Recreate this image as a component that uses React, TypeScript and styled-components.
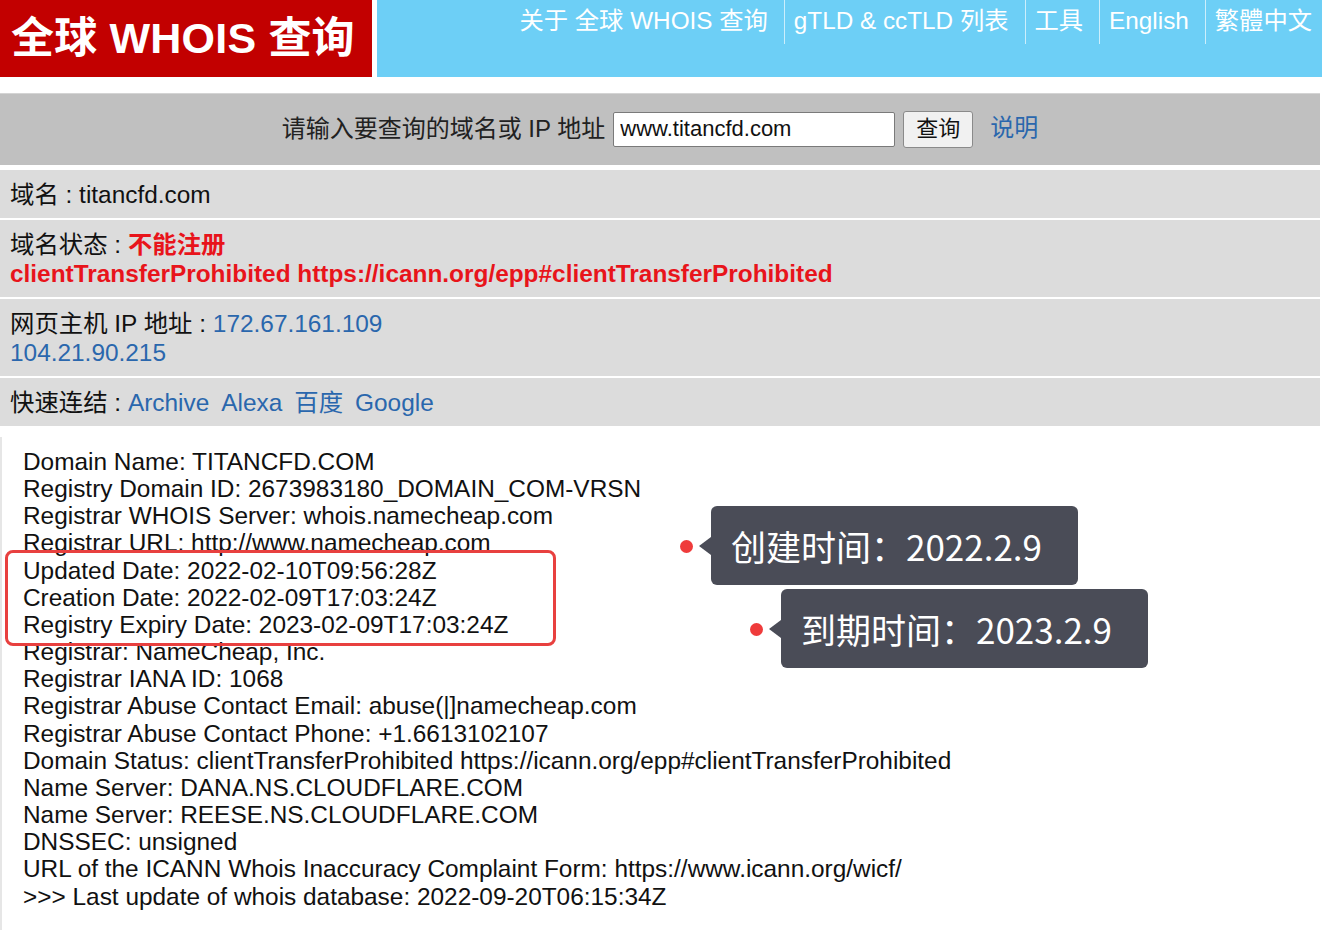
import * as React from "react";
import styled, { createGlobalStyle } from "styled-components";

const GlobalStyle = createGlobalStyle`
	html, body {
		margin: 0;
		padding: 0;
		background: #fff;
	}
	body {
		font-family: "Liberation Sans", Arial, "Noto Sans CJK SC", sans-serif;
		color: #111;
	}
`;

const Page = styled.div`
	width: 1322px;
`;

const Header = styled.header`
	display: flex;
	height: 77px;
	gap: 5px;
`;

const Logo = styled.div`
	width: 372px;
	flex-shrink: 0;
	background: #c20000;
	color: #fff;
	font-size: 43px;
	font-weight: bold;
	display: flex;
	align-items: center;
	padding: 0 0 9px 11px;
	box-sizing: border-box;
	white-space: nowrap;
	letter-spacing: 0.2px;
`;

const NavBar = styled.nav`
	flex: 1;
	background: #6dcff6;
	display: flex;
	justify-content: flex-end;
	align-items: flex-start;
`;

const NavItem = styled.a<{ $first?: boolean; $last?: boolean }>`
	color: #fff;
	font-size: 24.3px;
	height: 44px;
	line-height: 42px;
	padding: 0 ${(p) => (p.$last ? "10px" : "16px")} 0 ${(p) => (p.$first ? "0" : "9px")};
	border-left: ${(p) => (p.$first ? "none" : "1px solid rgba(255, 255, 255, 0.65)")};
	white-space: nowrap;
	text-decoration: none;
`;

const SearchBar = styled.form`
	margin-top: 16px;
	width: 1320px;
	height: 72px;
	background: #c0c0c0;
	border-top: 1px solid #d4d4d4;
	box-sizing: border-box;
	display: flex;
	align-items: center;
	justify-content: center;
	font-size: 24px;
	color: #222;
`;

const SearchLabel = styled.span`
	margin: 0 8px 7px 0;
`;

const SearchInput = styled.input`
	width: 282px;
	height: 35px;
	box-sizing: border-box;
	border: 1px solid #7a7a7a;
	border-radius: 2px;
	padding: 0 6px;
	margin-top: -1px;
	font-family: "Liberation Sans", Arial, sans-serif;
	font-size: 22px;
	color: #111;
	background: #fff;
`;

const SearchButton = styled.button`
	margin-left: 8px;
	width: 70px;
	height: 37px;
	border: 1px solid #8a8a8a;
	border-radius: 3px;
	background: #f1f1f1;
	font-family: "Liberation Sans", "Noto Sans CJK SC", sans-serif;
	font-size: 22px;
	line-height: 30px;
	color: #111;
	padding: 0 0 2px;
`;

const HelpLink = styled.a`
	margin: 0 0 8px 17px;
	color: #2a67ad;
	text-decoration: none;
`;

const InfoRow = styled.div<{ $first?: boolean }>`
	width: 1320px;
	margin-top: ${(p) => (p.$first ? "5px" : "2px")};
	background: #dcdcdc;
	padding: 10px 10px 9px;
	box-sizing: border-box;
	font-size: 24.4px;
	line-height: 29px;
	color: #111;
`;

const Red = styled.span`
	color: #e8141b;
	font-weight: bold;
`;

const Link = styled.a`
	color: #2a67ad;
	text-decoration: none;
	margin-right: 12px;
`;

const Whois = styled.div`
	position: relative;
	margin-top: 11px;
	border-left: 2px solid #e6e6e6;
	padding: 11px 0 0 21px;
	height: 493px;
	box-sizing: border-box;
	font-size: 24.4px;
	line-height: 27.15px;
	color: #111;
`;

const Line = styled.div`
	white-space: nowrap;
`;

const Highlight = styled.div`
	position: absolute;
	left: 3px;
	top: 113px;
	width: 551px;
	height: 96px;
	border: 3px solid #e8403f;
	border-radius: 8px;
	box-sizing: border-box;
`;

const Callout = styled.div<{ $left: number; $top: number }>`
	position: absolute;
	left: ${(p) => p.$left}px;
	top: ${(p) => p.$top}px;
	height: 79px;
	padding: 0 36px 0 20px;
	background: #4a4c57;
	border-radius: 6px;
	color: #fff;
	font-family: "Noto Sans CJK SC", "Liberation Sans", sans-serif;
	font-size: 35px;
	display: flex;
	align-items: center;
	white-space: nowrap;

	&::before {
		content: "";
		position: absolute;
		left: -12px;
		top: 50%;
		margin-top: -9px;
		border-style: solid;
		border-width: 9px 12px 9px 0;
		border-color: transparent #4a4c57 transparent transparent;
	}

	&::after {
		content: "";
		position: absolute;
		left: -31px;
		top: 50%;
		margin-top: -6px;
		width: 13px;
		height: 13px;
		border-radius: 50%;
		background: #ef3b3b;
	}
`;

const whoisLines = [
	"Domain Name: TITANCFD.COM",
	"Registry Domain ID: 2673983180_DOMAIN_COM-VRSN",
	"Registrar WHOIS Server: whois.namecheap.com",
	"Registrar URL: http://www.namecheap.com",
	"Updated Date: 2022-02-10T09:56:28Z",
	"Creation Date: 2022-02-09T17:03:24Z",
	"Registry Expiry Date: 2023-02-09T17:03:24Z",
	"Registrar: NameCheap, Inc.",
	"Registrar IANA ID: 1068",
	"Registrar Abuse Contact Email: abuse(|]namecheap.com",
	"Registrar Abuse Contact Phone: +1.6613102107",
	"Domain Status: clientTransferProhibited https://icann.org/epp#clientTransferProhibited",
	"Name Server: DANA.NS.CLOUDFLARE.COM",
	"Name Server: REESE.NS.CLOUDFLARE.COM",
	"DNSSEC: unsigned",
	"URL of the ICANN Whois Inaccuracy Complaint Form: https://www.icann.org/wicf/",
	">>> Last update of whois database: 2022-09-20T06:15:34Z",
];

const navItems = ["关于 全球 WHOIS 查询", "gTLD & ccTLD 列表", "工具", "English", "繁體中文"];

export default function App() {
	return (
		<Page>
			<GlobalStyle />
			<Header>
				<Logo>全球 WHOIS 查询</Logo>
				<NavBar>
					{navItems.map((item, i) => (
						<NavItem key={item} $first={i === 0} $last={i === navItems.length - 1}>
							{item}
						</NavItem>
					))}
				</NavBar>
			</Header>

			<SearchBar onSubmit={(e) => e.preventDefault()}>
				<SearchLabel>请输入要查询的域名或 IP 地址</SearchLabel>
				<SearchInput defaultValue="www.titancfd.com" />
				<SearchButton type="submit">查询</SearchButton>
				<HelpLink>说明</HelpLink>
			</SearchBar>

			<InfoRow $first>域名 : titancfd.com</InfoRow>
			<InfoRow>
				域名状态 : <Red>不能注册</Red>
				<br />
				<Red>clientTransferProhibited https://icann.org/epp#clientTransferProhibited</Red>
			</InfoRow>
			<InfoRow>
				网页主机 IP 地址 : <Link>172.67.161.109</Link>
				<br />
				<Link>104.21.90.215</Link>
			</InfoRow>
			<InfoRow>
				快速连结 : <Link>Archive</Link>
				<Link>Alexa</Link>
				<Link>百度</Link>
				<Link>Google</Link>
			</InfoRow>

			<Whois>
				{whoisLines.map((line) => (
					<Line key={line}>{line}</Line>
				))}
				<Highlight />
				<Callout $left={709} $top={69}>
					创建时间：2022.2.9
				</Callout>
				<Callout $left={779} $top={152}>
					到期时间：2023.2.9
				</Callout>
			</Whois>
		</Page>
	);
}
